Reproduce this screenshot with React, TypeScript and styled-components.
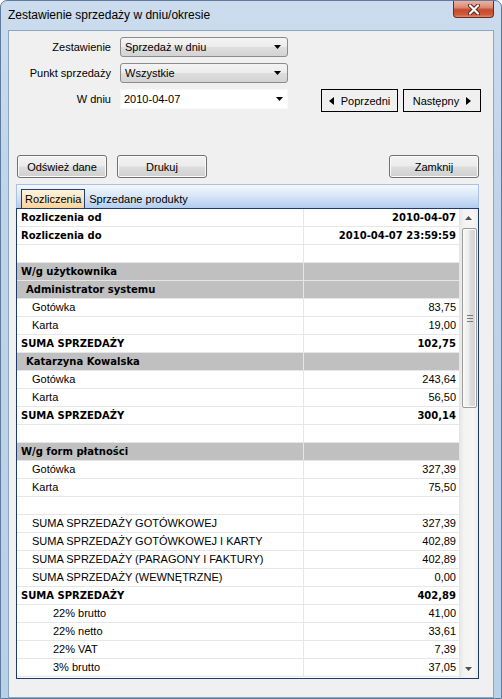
import React from 'react';
import styled, { createGlobalStyle } from 'styled-components';

const Global = createGlobalStyle`
  html, body { margin: 0; padding: 0; background: #ffffff; }
  body { font-family: "Liberation Sans", Arial, sans-serif; color: #000; }
  * { box-sizing: border-box; }
`;

const Window = styled.div`
  width: 502px;
  height: 699px;
  display: flex;
  flex-direction: column;
  background: linear-gradient(180deg, #cbdcee 0%, #bfd4ea 30%, #b9d0e9 100%);
  border: 1px solid #5f7b9c;
  border-radius: 7px 7px 0 0;
  overflow: hidden;
`;

const TitleBar = styled.div`
  height: 29px;
  flex: none;
  display: flex;
  align-items: flex-start;
  padding-left: 7px;
`;

const TitleText = styled.div`
  font-size: 12px;
  line-height: 14px;
  margin-top: 7px;
  color: #000;
`;

const CloseButton = styled.div`
  margin-left: auto;
  margin-right: 7px;
  width: 41px;
  height: 17px;
  display: flex;
  align-items: center;
  justify-content: center;
  background: linear-gradient(180deg, #eab3a2 0%, #dc8a73 40%, #c44a2f 55%, #cf5a3b 85%, #e08a6c 100%);
  border: 1px solid #6b2c1f;
  border-top: none;
  border-radius: 0 0 4px 4px;
`;

const Client = styled.div`
  flex: 1;
  margin: 0 7px;
  border: 1px solid #8da6c1;
  background: #f0f0f0;
  padding: 6px 14px 11px 7px;
  display: flex;
  flex-direction: column;
`;

const FormRow = styled.div<{ $gap?: number }>`
  display: flex;
  align-items: flex-start;
  height: 20px;
  margin-bottom: ${(p) => p.$gap ?? 6}px;
`;

const Label = styled.div`
  width: 104px;
  padding-right: 9px;
  text-align: right;
  font-size: 11px;
  line-height: 20px;
`;

const Combo = styled.div`
  width: 168px;
  height: 20px;
  border: 1px solid #8a8b8c;
  border-radius: 3px;
  background: linear-gradient(180deg, #f4f4f4 0%, #ececec 48%, #dedede 52%, #d3d3d3 100%);
  display: flex;
  align-items: center;
  justify-content: space-between;
  padding: 0 6px 0 4px;
  font-size: 11px;
`;

const DateField = styled.div`
  width: 168px;
  height: 20px;
  border: 1px solid #f7f7f7;
  background: #ffffff;
  display: flex;
  align-items: center;
  justify-content: space-between;
  padding: 0 4px 0 3px;
  font-size: 11px;
`;

const NavGroup = styled.div`
  margin-left: auto;
  margin-right: -2px;
  display: flex;
  gap: 5px;
`;

const NavButton = styled.div<{ $w: number }>`
  width: ${(p) => p.$w}px;
  height: 23px;
  border: 1px solid #000;
  background: #f0f0f0;
  display: flex;
  align-items: center;
  justify-content: center;
  gap: 7px;
  font-size: 11px;
`;

const ButtonRow = styled.div`
  margin-top: 46px;
  display: flex;
  gap: 10px;
  padding-left: 1px;
`;

const PushButton = styled.div<{ $right?: boolean }>`
  width: 90px;
  height: 23px;
  margin-left: ${(p) => (p.$right ? 'auto' : '0')};
  border: 1px solid #707070;
  border-radius: 3px;
  background: linear-gradient(180deg, #f3f3f3 0%, #ebebeb 48%, #dddddd 52%, #cfcfcf 100%);
  box-shadow: inset 0 0 0 1px #fbfbfb;
  display: flex;
  align-items: center;
  justify-content: center;
  font-size: 11px;
`;

const TabStrip = styled.div`
  margin-top: 6px;
  height: 24px;
  display: flex;
  align-items: flex-end;
  background: linear-gradient(180deg, #f3f8fe 0%, #d9e7f8 45%, #b3cdef 100%);
  border: 1px solid #a9c1e2;
  border-bottom: none;
  padding-left: 4px;
`;

const Tab = styled.div<{ $active?: boolean }>`
  height: 19px;
  padding: 0 3px;
  font-size: 11px;
  line-height: 18px;
  border: 1px solid ${(p) => (p.$active ? '#24406d' : 'transparent')};
  border-bottom: none;
  background: ${(p) =>
    p.$active ? 'linear-gradient(180deg, #fff3df 0%, #fde2b7 60%, #f9d29a 100%)' : 'transparent'};
`;

const Table = styled.div`
  height: 471px;
  border: 1px solid #1d3a6a;
  background: #ffffff;
  display: grid;
  grid-template-columns: 1fr 19px;
  overflow: hidden;
`;

const Rows = styled.div`
  display: flex;
  flex-direction: column;
`;

const Row = styled.div`
  display: grid;
  grid-template-columns: 286px 156px;
  height: 18px;
  flex: none;
  border-bottom: 1px solid #e6e6e6;
`;

const Cell = styled.div<{ $indent?: number; $bold?: boolean; $gray?: boolean; $right?: boolean }>`
  height: 17px;
  line-height: 17px;
  white-space: nowrap;
  overflow: hidden;
  padding-left: ${(p) => p.$indent ?? 0}px;
  padding-right: ${(p) => (p.$right ? 3 : 0)}px;
  text-align: ${(p) => (p.$right ? 'right' : 'left')};
  background: ${(p) => (p.$gray ? '#c0c0c0' : '#ffffff')};
  font-family: ${(p) => (p.$bold ? '"DejaVu Sans", Verdana, sans-serif' : '"Liberation Sans", Arial, sans-serif')};
  font-weight: ${(p) => (p.$bold ? 700 : 400)};
  font-size: ${(p) => (p.$bold ? 10 : 11)}px;
  & + & {
    border-left: 1px solid #e6e6e6;
  }
`;

const ScrollBar = styled.div`
  display: flex;
  flex-direction: column;
  background: linear-gradient(90deg, #e4e4e4 0%, #f3f3f3 25%, #f5f5f5 75%, #ebebeb 100%);
`;

const ScrollArrow = styled.div`
  height: 18px;
  flex: none;
  display: flex;
  align-items: center;
  justify-content: center;
`;

const Track = styled.div`
  flex: 1;
  padding: 1px 1px 0 3px;
`;

const Thumb = styled.div`
  height: 180px;
  width: 15px;
  border: 1px solid #9b9b9b;
  border-radius: 2px;
  background: linear-gradient(90deg, #f8f8f8 0%, #ececec 45%, #dcdcdc 55%, #d4d4d4 100%);
  box-shadow: inset 0 0 0 1px #fafafa;
  display: flex;
  align-items: center;
  justify-content: center;
`;

const Arrow = ({ dir, color = '#000' }: { dir: 'down' | 'up' | 'left' | 'right'; color?: string }) => {
  const pts: Record<string, string> = {
    down: '0,0 7,0 3.5,4',
    up: '0,4 7,4 3.5,0',
    left: '5,0 5,8 0,4',
    right: '0,0 0,8 5,4',
  };
  const horiz = dir === 'left' || dir === 'right';
  return (
    <svg width={horiz ? 5 : 7} height={horiz ? 8 : 4} viewBox={horiz ? '0 0 5 8' : '0 0 7 4'}>
      <polygon points={pts[dir]} fill={color} />
    </svg>
  );
};

type Kind = 'head' | 'section' | 'group' | 'item' | 'total' | 'sub' | 'blank';
const rows: { k: Kind; l?: string; v?: string }[] = [
  { k: 'head', l: 'Rozliczenia od', v: '2010-04-07' },
  { k: 'head', l: 'Rozliczenia do', v: '2010-04-07 23:59:59' },
  { k: 'blank' },
  { k: 'section', l: 'W/g użytkownika' },
  { k: 'group', l: 'Administrator systemu' },
  { k: 'item', l: 'Gotówka', v: '83,75' },
  { k: 'item', l: 'Karta', v: '19,00' },
  { k: 'total', l: 'SUMA SPRZEDAŻY', v: '102,75' },
  { k: 'group', l: 'Katarzyna Kowalska' },
  { k: 'item', l: 'Gotówka', v: '243,64' },
  { k: 'item', l: 'Karta', v: '56,50' },
  { k: 'total', l: 'SUMA SPRZEDAŻY', v: '300,14' },
  { k: 'blank' },
  { k: 'section', l: 'W/g form płatności' },
  { k: 'item', l: 'Gotówka', v: '327,39' },
  { k: 'item', l: 'Karta', v: '75,50' },
  { k: 'blank' },
  { k: 'item', l: 'SUMA SPRZEDAŻY GOTÓWKOWEJ', v: '327,39' },
  { k: 'item', l: 'SUMA SPRZEDAŻY GOTÓWKOWEJ I KARTY', v: '402,89' },
  { k: 'item', l: 'SUMA SPRZEDAŻY (PARAGONY I FAKTURY)', v: '402,89' },
  { k: 'item', l: 'SUMA SPRZEDAŻY (WEWNĘTRZNE)', v: '0,00' },
  { k: 'total', l: 'SUMA SPRZEDAŻY', v: '402,89' },
  { k: 'sub', l: '22% brutto', v: '41,00' },
  { k: 'sub', l: '22% netto', v: '33,61' },
  { k: 'sub', l: '22% VAT', v: '7,39' },
  { k: 'sub', l: '3% brutto', v: '37,05' },
];

const indentOf: Record<Kind, number> = { head: 4, section: 4, group: 9, item: 15, total: 4, sub: 36, blank: 0 };

export default function App() {
  return (
    <>
      <Global />
      <Window>
        <TitleBar>
          <TitleText>Zestawienie sprzedaży w dniu/okresie</TitleText>
          <CloseButton>
            <svg width="14" height="11" viewBox="0 0 14 11">
              <path d="M3 1.5 L11 9.5 M11 1.5 L3 9.5" stroke="#5a2418" strokeWidth="4" strokeLinecap="round" />
              <path d="M3 1.5 L11 9.5 M11 1.5 L3 9.5" stroke="#ffffff" strokeWidth="2.2" strokeLinecap="round" />
            </svg>
          </CloseButton>
        </TitleBar>
        <Client>
          <FormRow>
            <Label>Zestawienie</Label>
            <Combo>
              <span>Sprzedaż w dniu</span>
              <Arrow dir="down" />
            </Combo>
          </FormRow>
          <FormRow>
            <Label>Punkt sprzedaży</Label>
            <Combo>
              <span>Wszystkie</span>
              <Arrow dir="down" />
            </Combo>
          </FormRow>
          <FormRow $gap={0}>
            <Label>W dniu</Label>
            <DateField>
              <span>2010-04-07</span>
              <Arrow dir="down" />
            </DateField>
            <NavGroup>
              <NavButton $w={77}>
                <Arrow dir="left" />
                <span>Poprzedni</span>
              </NavButton>
              <NavButton $w={78}>
                <span>Następny</span>
                <Arrow dir="right" />
              </NavButton>
            </NavGroup>
          </FormRow>
          <ButtonRow>
            <PushButton>Odśwież dane</PushButton>
            <PushButton>Drukuj</PushButton>
            <PushButton $right>Zamknij</PushButton>
          </ButtonRow>
          <TabStrip>
            <Tab $active>Rozliczenia</Tab>
            <Tab>Sprzedane produkty</Tab>
          </TabStrip>
          <Table>
            <Rows>
              {rows.map((r, i) => {
                const gray = r.k === 'section' || r.k === 'group';
                const boldLabel = r.k === 'head' || r.k === 'section' || r.k === 'group' || r.k === 'total';
                const boldValue = r.k === 'head' || r.k === 'total';
                return (
                  <Row key={i}>
                    <Cell $indent={indentOf[r.k]} $bold={boldLabel} $gray={gray}>
                      {r.l ?? ''}
                    </Cell>
                    <Cell $right $bold={boldValue} $gray={gray}>
                      {r.v ?? ''}
                    </Cell>
                  </Row>
                );
              })}
            </Rows>
            <ScrollBar>
              <ScrollArrow>
                <Arrow dir="up" color="#505050" />
              </ScrollArrow>
              <Track>
                <Thumb>
                  <svg width="6" height="7" viewBox="0 0 6 7">
                    <path d="M0 0.5 H6 M0 3.5 H6 M0 6.5 H6" stroke="#7a7a7a" strokeWidth="1" />
                  </svg>
                </Thumb>
              </Track>
              <ScrollArrow>
                <Arrow dir="down" color="#505050" />
              </ScrollArrow>
            </ScrollBar>
          </Table>
        </Client>
      </Window>
    </>
  );
}
